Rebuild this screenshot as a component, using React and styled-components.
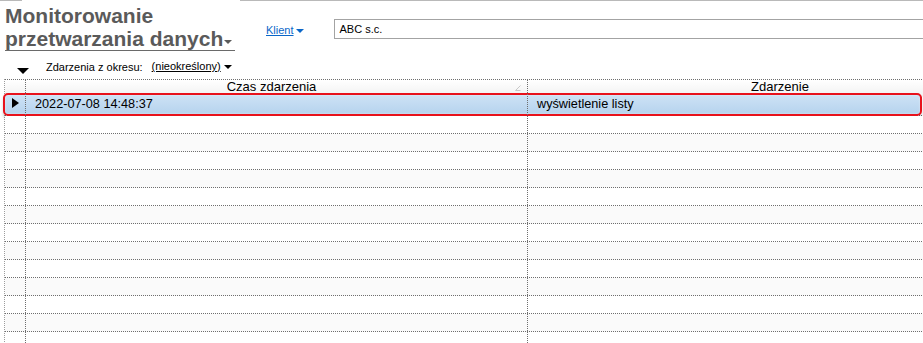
import React from "react";
import styled, { createGlobalStyle } from "styled-components";

const GlobalStyle = createGlobalStyle`
  html, body {
    margin: 0;
    padding: 0;
    background: #ffffff;
    overflow: hidden;
  }
  body {
    font-family: "Liberation Sans", Arial, sans-serif;
    color: #000;
  }
`;

const Page = styled.div`
  width: 923px;
  height: 343px;
  overflow: hidden;
`;

const TopRule = styled.div`
  display: flex;
  height: 1px;
`;

const RuleSegment = styled.span`
  display: block;
  height: 1px;
  width: ${p => (p.$width ? `${p.$width}px` : "auto")};
  flex: ${p => (p.$width ? "none" : "1")};
  background: ${p => (p.$blank ? "transparent" : "#b9b9b9")};
`;

const HeaderRow = styled.div`
  display: flex;
  align-items: flex-start;
  height: 57px;
`;

const TitleBlock = styled.div`
  margin: 3px 0 0 5px;
  width: 230px;
  border-bottom: 1px solid #6a6a6a;
  font-size: 21px;
  line-height: 23px;
  font-weight: bold;
  color: #5a5a5a;
`;

const TitleLine = styled.div`
  display: flex;
  align-items: center;
  white-space: nowrap;
`;

const Caret = styled.span`
  display: inline-block;
  width: 0;
  height: 0;
  border-left: ${p => p.$w / 2}px solid transparent;
  border-right: ${p => p.$w / 2}px solid transparent;
  border-top: ${p => p.$h}px solid ${p => p.$color};
  margin: ${p => p.$margin || "0"};
`;

const ClientLink = styled.a`
  display: flex;
  align-items: center;
  margin: 23px 0 0 31px;
  font-size: 11px;
  line-height: 13px;
  color: #0a66c8;
  text-decoration: none;
  span:first-child {
    text-decoration: underline;
  }
`;

const ClientInput = styled.div`
  margin: 18px 0 0 30px;
  flex: 1;
  height: 20px;
  box-sizing: border-box;
  border: 1px solid #a3a3a3;
  border-right: none;
  padding: 0 0 0 5px;
  font-size: 11px;
  line-height: 18px;
`;

const FilterRow = styled.div`
  display: flex;
  align-items: center;
  height: 21px;
  font-size: 11px;
  line-height: 13px;
`;

const Collapse = styled.span`
  display: block;
  width: 0;
  height: 0;
  margin: 5px 0 0 17px;
  border-left: 6px solid transparent;
  border-right: 6px solid transparent;
  border-top: 6px solid #000;
`;

const FilterLabel = styled.span`
  margin-left: 17px;
  margin-top: -3px;
`;

const FilterValue = styled.span`
  display: flex;
  align-items: center;
  margin-left: 9px;
  margin-top: -4px;
  span:first-child {
    text-decoration: underline;
  }
`;

const Grid = styled.div`
  margin-left: 4px;
  width: 1027px;
  border-left: 1px dotted #9c9c9c;
  border-top: 1px dotted #6e6e6e;
`;

const Row = styled.div`
  position: relative;
  display: grid;
  grid-template-columns: 21px 502px 504px;
  height: 18px;
  box-sizing: border-box;
  border-bottom: 1px dotted #6e6e6e;
  background: ${p =>
    p.$head
      ? "linear-gradient(#ffffff, #f1f1f1)"
      : p.$shade
      ? "#fafafa"
      : "#ffffff"};
`;

const Cell = styled.div`
  position: relative;
  box-sizing: border-box;
  border-right: ${p => (p.$last ? "none" : "1px dotted #6e6e6e")};
  display: flex;
  align-items: ${p => (p.$head ? "flex-start" : "center")};
  justify-content: ${p => (p.$head ? "center" : "flex-start")};
  padding-left: ${p => (p.$head || p.$bare ? "0" : "9px")};
  padding-right: ${p => (p.$head && !p.$last ? "10px" : "0")};
  font-size: ${p => (p.$head ? "13px" : "12.7px")};
  line-height: ${p => (p.$head ? "13px" : "15px")};
  white-space: nowrap;
  z-index: 1;
`;

const SortMark = styled.svg`
  position: absolute;
  right: 6px;
  top: 5px;
`;

const Highlight = styled.div`
  position: absolute;
  top: -5px;
  bottom: -1px;
  left: -2px;
  width: 919px;
  box-sizing: border-box;
  border: 2px solid #e8121c;
  border-radius: 5px;
  background: linear-gradient(#cde2f5, #b6d3ee);
  box-shadow: 0 3px 3px rgba(0, 0, 0, 0.18), inset 0 0 2px rgba(255, 255, 255, 0.6);
`;

const Pointer = styled.span`
  display: block;
  align-self: flex-start;
  width: 0;
  height: 0;
  margin: 0 0 0 7px;
  border-top: 5px solid transparent;
  border-bottom: 5px solid transparent;
  border-left: 7px solid #000;
`;

const RowText = styled.span`
  margin-top: ${p => (p.$lift ? "-4px" : "0")};
`;

const rows = Array.from({ length: 13 }, (_, i) => i);

export default function App() {
  return (
    <Page>
      <GlobalStyle />
      <TopRule>
        <RuleSegment $width={22} />
        <RuleSegment $width={218} $blank />
        <RuleSegment />
      </TopRule>
      <HeaderRow>
        <TitleBlock>
          <TitleLine>Monitorowanie</TitleLine>
          <TitleLine>
            przetwarzania danych
            <Caret $w={8} $h={4} $color="#5a5a5a" $margin="6px 0 0 1px" />
          </TitleLine>
        </TitleBlock>
        <ClientLink href="#">
          <span>Klient</span>
          <Caret $w={8} $h={4} $color="#0a66c8" $margin="0 0 0 2px" />
        </ClientLink>
        <ClientInput>ABC s.c.</ClientInput>
      </HeaderRow>
      <FilterRow>
        <Collapse />
        <FilterLabel>Zdarzenia z okresu:</FilterLabel>
        <FilterValue>
          <span>(nieokreślony)</span>
          <Caret $w={8} $h={4} $color="#000" $margin="0 0 0 3px" />
        </FilterValue>
      </FilterRow>
      <Grid>
        <Row $head>
          <Cell $head />
          <Cell $head>
            Czas zdarzenia
            <SortMark width="6" height="6" viewBox="0 0 6 6">
              <path d="M0.5 5.5 L5.5 0.5 M0.5 5.5 H5.5" stroke="#c8c8c8" strokeWidth="1" fill="none" />
            </SortMark>
          </Cell>
          <Cell $head $last>Zdarzenie</Cell>
        </Row>
        <Row>
          <Highlight />
          <Cell $bare>
            <Pointer />
          </Cell>
          <Cell>
            <RowText $lift>2022-07-08 14:48:37</RowText>
          </Cell>
          <Cell $last>
            <RowText $lift>wyświetlenie listy</RowText>
          </Cell>
        </Row>
        {rows.map(i => (
          <Row key={i} $shade={i % 2 === 1}>
            <Cell />
            <Cell />
            <Cell $last />
          </Row>
        ))}
      </Grid>
    </Page>
  );
}
